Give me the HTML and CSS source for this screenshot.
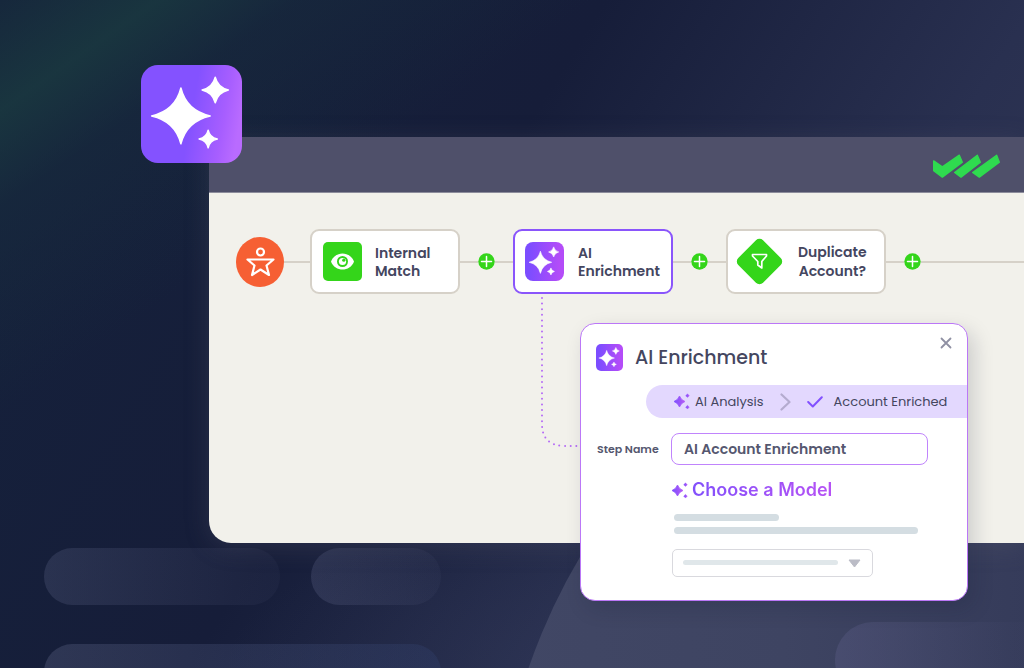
FILE: index.html
```
<!DOCTYPE html>
<html lang="en">
<head>
  <meta charset="UTF-8" />
  <meta name="viewport" content="width=device-width, initial-scale=1.0"/>
  <title>AI Enrichment</title>
  <link rel="stylesheet" href="styles.css">
</head>
<body>

  <!-- shared icons -->
  <svg class="defs" aria-hidden="true">
    <defs>
      <linearGradient id="purple" x1="0" y1="0" x2="1" y2="0">
        <stop offset="0" stop-color="#7c4dff"/>
        <stop offset="1" stop-color="#b65cf5"/>
      </linearGradient>
      <symbol id="sparkles" viewBox="0 0 100 100" preserveAspectRatio="none">
        <path d="M39.500 23.500Q45 46.500 68.500 52Q45 57.500 39.500 80.500Q34 57.500 10.500 52Q34 46.500 39.500 23.500Z" stroke-width="1.500" stroke-linejoin="round"/>
        <path d="M73.500 12.500Q76 23 86.500 25.500Q76 28 73.500 38.500Q71 28 60.500 25.500Q71 23 73.500 12.500Z" stroke-width="1.500" stroke-linejoin="round"/>
        <path d="M66.500 66.500Q68 74 75.500 75.500Q68 77 66.500 84.500Q65 77 57.500 75.500Q65 74 66.500 66.500Z" stroke-width="1.500" stroke-linejoin="round"/>
      </symbol>
      <symbol id="spark" viewBox="0 0 17 17">
        <path d="M5.500 3Q7 7 11 8.500Q7 10 5.500 14Q4 10 0 8.500Q4 7 5.500 3Z" stroke-width=".8" stroke-linejoin="round"/>
        <path d="M13.500 .8L15.400 2.700L13.500 4.600L11.600 2.700Z" stroke-width=".3"/>
        <path d="M13.500 12.300L15.400 14.200L13.500 16.100L11.600 14.200Z" stroke-width=".3"/>
      </symbol>
      <symbol id="plus" viewBox="0 0 17 17">
        <circle cx="8.500" cy="8.500" r="8.200" fill="#34d51a"/>
        <path d="M8.500 3.500V13.500M3.500 8.500H13.500" stroke="#fff" stroke-width="1.500" stroke-linecap="round"/>
      </symbol>
    </defs>
  </svg>

  <div class="scene">
    <div class="backdrop" aria-hidden="true">
      <span class="orb"></span>
      <span class="pill pill-a"></span>
      <span class="pill pill-b"></span>
      <span class="pill pill-c"></span>
      <span class="pill pill-d"></span>
    </div>

    <main class="window">
      <div class="app-badge">
        <svg class="sparkles"><use href="#sparkles"/></svg>
      </div>

      <header class="topbar">
        <svg class="logo" viewBox="0 0 201 71" role="img" aria-label="Logo">
          <g fill="#2fdb4f" stroke="#2fdb4f" stroke-width="4" stroke-linejoin="round">
            <path d="M2 20L28 38L79 3L88 24L28 69L2 50Z"/>
            <path d="M65 55L133 3L142 24L84 69Z"/>
            <path d="M119 55L191 3L199 24L139 69Z"/>
          </g>
        </svg>
      </header>

      <div class="canvas">
        <div class="flow">
          <div class="start">
            <svg viewBox="0 0 48 50" fill="none" stroke="#fff" stroke-width="2.200" stroke-linejoin="round">
              <circle cx="24.500" cy="15" r="3.500"/>
              <path d="M11.500 22.500H37.500L30.500 28.500L33 38L24.500 32.500L16 38L18.500 28.500Z"/>
            </svg>
          </div>
          <span class="line line-start"></span>
          <div class="step">
            <div class="step-icon green">
              <svg viewBox="0 0 39 39">
                <path d="M8 19.500C12 8.800 27 8.800 31 19.500C27 30.200 12 30.200 8 19.500Z" fill="#fff"/>
                <circle cx="19.500" cy="19.500" r="5.500" fill="#34d51a"/>
                <circle cx="19.500" cy="19.500" r="3.600" fill="#fff"/>
                <circle cx="20.800" cy="18.200" r="1.600" fill="#34d51a"/>
              </svg>
            </div>
            <span>Internal<br>Match</span>
          </div>
          <span class="line"></span>
          <button class="add" aria-label="Add step"><svg><use href="#plus"/></svg></button>
          <span class="line"></span>
          <div class="step step-wide active">
            <div class="step-icon purple">
              <svg class="sparkles"><use href="#sparkles"/></svg>
            </div>
            <span>AI<br>Enrichment</span>
          </div>
          <span class="line"></span>
          <button class="add" aria-label="Add step"><svg><use href="#plus"/></svg></button>
          <span class="line"></span>
          <div class="step step-wide condition">
            <svg class="diamond" viewBox="0 0 47 47">
              <rect x="6" y="6" width="35" height="35" rx="5" transform="rotate(45 23.500 23.500)" fill="#34d51a"/>
              <path d="M16.500 16.500H30.500V18L25.800 23.500V30L21.800 27V23.500L16.500 18Z" fill="none" stroke="#fff" stroke-width="1.700" stroke-linejoin="round"/>
            </svg>
            <span>Duplicate<br>Account?</span>
          </div>
          <span class="line"></span>
          <button class="add" aria-label="Add step"><svg><use href="#plus"/></svg></button>
          <span class="line line-end"></span>
        </div>
      </div>

      <svg class="connector" viewBox="0 0 40 152" fill="none" aria-hidden="true">
        <path d="M2 2V128Q2 150 25 150H40" stroke="#b56cf6" stroke-width="2" stroke-linecap="round" stroke-dasharray="0 5.600"/>
      </svg>

      <section class="panel">
        <button class="close" aria-label="Close">
          <svg viewBox="0 0 12 12"><path d="M1.500 1.500L10.500 10.500M10.500 1.500L1.500 10.500" stroke="#8f90a3" stroke-width="1.800" stroke-linecap="round"/></svg>
        </button>
        <div class="panel-head">
          <div class="panel-icon purple">
            <svg class="sparkles"><use href="#sparkles"/></svg>
          </div>
          <h2>AI Enrichment</h2>
        </div>

        <div class="progress">
          <svg class="spark"><use href="#spark"/></svg>
          <span>AI Analysis</span>
          <svg class="chevron" viewBox="0 0 11 18" fill="none"><path d="M1.500 1.500L9.500 9L1.500 16.500" stroke="#b4abcf" stroke-width="2.200" stroke-linecap="round" stroke-linejoin="round"/></svg>
          <svg class="tick" viewBox="0 0 16 12" fill="none"><path d="M1.200 6L5.800 10.500L14.800 1.200" stroke="#8250ff" stroke-width="2" stroke-linecap="round" stroke-linejoin="round"/></svg>
          <span>Account Enriched</span>
        </div>

        <div class="field">
          <label for="stepName">Step Name</label>
          <input type="text" id="stepName" value="AI Account Enrichment">
        </div>

        <div class="model">
          <h3><svg class="spark"><use href="#spark"/></svg><span>Choose a Model</span></h3>
          <div class="bar bar-short"></div>
          <div class="bar bar-long"></div>
          <div class="select-box">
            <select id="model" aria-label="Model">
              <option value=""></option>
            </select>
            <span class="select-bar"></span>
            <svg class="caret" viewBox="0 0 13 9"><path d="M1 1H12L6.500 8Z" fill="#bbbcc6" stroke="#bbbcc6" stroke-linejoin="round"/></svg>
          </div>
        </div>
      </section>
    </main>
  </div>

</body>
</html>
```
FILE: styles.css
```
* {
  box-sizing: border-box;
}
body {
  margin: 0;
  font-family: Poppins, Inter, sans-serif;
  color: #44465f;
}
svg {
  display: block;
}
h2, h3 {
  margin: 0;
}
button {
  padding: 0;
  border: 0;
  background: none;
  cursor: pointer;
}
.defs {
  position: absolute;
  width: 0;
  height: 0;
}

/* background */
.scene {
  position: relative;
  min-height: 100vh;
  padding: 137px 0 125px 209px;
  overflow: hidden;
  background:
    radial-gradient(ellipse 50% 26% at 72% 100%, rgba(64,70,104,0.4), rgba(64,70,104,0)),
    linear-gradient(145deg, rgba(24,48,60,0.4) 0%, rgba(26,58,64,0.8) 8%, rgba(24,48,62,0.4) 15%, rgba(22,32,58,0) 30%),
    linear-gradient(122deg, #15223c 0%, #161d39 42%, #293050 72%, #343956 100%);
}
.backdrop {
  position: absolute;
  inset: 0;
}
.orb {
  position: absolute;
  left: 496px;
  top: 263px;
  width: 1200px;
  height: 1200px;
  border-radius: 50%;
  background: linear-gradient(90deg, #414765 0%, #3e4462 24%, #353b5a 45%);
}
.pill {
  position: absolute;
  height: 57px;
  border-radius: 29px;
  background: linear-gradient(90deg, rgba(190,195,240,0.12), rgba(190,195,240,0.03));
}
.pill-a {
  left: 44px;
  top: 548px;
  width: 236px;
}
.pill-b {
  left: 311px;
  top: 548px;
  width: 130px;
}
.pill-c {
  left: 44px;
  top: 644px;
  width: 397px;
  background: linear-gradient(90deg, rgba(190,195,235,0.15), rgba(70,100,170,0.12));
}
.pill-d {
  left: 835px;
  top: 622px;
  width: 240px;
  height: 76px;
  border-radius: 38px;
  background: linear-gradient(90deg, rgba(100,100,145,0.3), rgba(100,100,145,0.03) 75%);
}

/* app window */
.window {
  position: relative;
  border-radius: 0 0 0 22px;
  box-shadow: 0 4px 24px rgba(90,88,110,0.3);
}
.topbar {
  display: flex;
  align-items: center;
  justify-content: flex-end;
  height: 56px;
  padding: 2px 24px 0 0;
  background: #4f506a;
  border-bottom: 1px solid #8d8d9c;
}
.logo {
  width: 67px;
  height: 24px;
}
.app-badge {
  position: absolute;
  left: -68px;
  top: -72px;
  width: 101px;
  height: 98px;
  border-radius: 17px;
  background: linear-gradient(100deg, #8452ff 50%, #a75eff 78%, #b96bff 92%);
}
.sparkles {
  width: 100%;
  height: 100%;
  fill: #fff;
  stroke: #fff;
}
.canvas {
  height: 350px;
  padding: 36px 0 0 27px;
  background: #f2f1eb;
  border-radius: 0 0 0 22px;
}

/* flow */
.flow {
  display: flex;
  align-items: center;
}
.flow > * {
  flex-shrink: 0;
}
.start {
  width: 48px;
  height: 50px;
  border-radius: 50%;
  background: #f65f33;
}
.line {
  width: 18px;
  height: 2px;
  background: #d6d1c8;
}
.line-start {
  width: 26px;
}
.flow .line-end {
  flex: 1;
}
.add {
  width: 17px;
  height: 17px;
}
.add svg {
  width: 17px;
  height: 17px;
}
.step {
  display: flex;
  align-items: center;
  gap: 13px;
  width: 150px;
  height: 65px;
  padding-left: 11px;
  background: #fff;
  border: 2px solid #d6d1c8;
  border-radius: 9px;
  font-size: 14px;
  line-height: 18px;
  font-weight: 600;
}
.step span {
  padding-top: 1px;
}
.step-wide {
  width: 160px;
}
.active {
  padding-left: 10px;
  gap: 14px;
  border-color: #8a55fb;
}
.condition {
  padding-left: 8px;
  gap: 15px;
  line-height: 19px;
  text-align: center;
}
.step-icon {
  width: 39px;
  height: 39px;
  border-radius: 5px;
}
.green {
  background: #34d51a;
}
.purple {
  background: linear-gradient(90deg, #7c4dff 10%, #b44cf8 90%);
  border-radius: 8px;
}
.diamond {
  width: 47px;
  height: 47px;
}
.connector {
  position: absolute;
  left: 331px;
  top: 159px;
  width: 40px;
  height: 152px;
}

/* enrichment panel */
.panel {
  position: absolute;
  left: 371px;
  top: 186px;
  width: 388px;
  padding: 20px 0 23px 15px;
  background: #fff;
  border: 1px solid #bb77f7;
  border-radius: 15px;
  box-shadow: 6px 8px 20px rgba(20,22,45,0.17);
}
.panel-head {
  display: flex;
  align-items: center;
  gap: 12px;
}
.panel-icon {
  width: 27px;
  height: 27px;
  border-radius: 5px;
}
.panel-head h2 {
  font-size: 19px;
  line-height: 27px;
  font-weight: 500;
}
.close {
  position: absolute;
  right: 15px;
  top: 13px;
}
.close svg {
  width: 12px;
  height: 12px;
}
.progress {
  display: flex;
  align-items: center;
  height: 33px;
  margin: 14px 0 15px 50px;
  padding-left: 28px;
  border-radius: 17px 0 0 17px;
  background: #e3d8fe;
}
.spark {
  width: 17px;
  height: 17px;
  fill: url(#purple);
  stroke: url(#purple);
}
.progress span {
  padding-top: 1px;
  font-size: 13px;
  line-height: 20px;
  white-space: nowrap;
}
.progress .spark {
  margin-right: 4px;
}
.chevron {
  width: 11px;
  height: 18px;
  margin: 0 16px;
}
.tick {
  width: 16px;
  height: 12px;
  margin-right: 11px;
}
.field {
  display: grid;
  grid-template-columns: 75px 257px;
  align-items: center;
}
.field label {
  padding-left: 1px;
  font-size: 11px;
  font-weight: 600;
  color: #55576f;
}
.field input {
  height: 32px;
  padding: 0 12px;
  border: 1px solid #c084fc;
  border-radius: 8px;
  background: #fff;
  font-family: inherit;
  font-size: 14px;
  font-weight: 600;
  color: #55576f;
}
.model {
  padding: 13px 0 0 76px;
}
.model h3 {
  display: flex;
  align-items: center;
  gap: 3px;
  margin-bottom: 12px;
  font-family: Inter, sans-serif;
  font-size: 18px;
  line-height: 24px;
  font-weight: 600;
}
.model h3 span {
  background: linear-gradient(90deg, #8250fb, #b652f5);
  background-clip: text;
  -webkit-background-clip: text;
  color: transparent;
}
.bar {
  height: 7px;
  margin-left: 2px;
  border-radius: 4px;
  background: #d4dde2;
}
.bar-short {
  width: 105px;
  margin-bottom: 6px;
}
.bar-long {
  width: 244px;
  margin-bottom: 15px;
}
.select-box {
  position: relative;
  width: 201px;
}
.select-box select {
  display: block;
  width: 100%;
  height: 28px;
  border: 1px solid #d9d9de;
  border-radius: 5px;
  background: #fff;
  appearance: none;
}
.select-bar {
  position: absolute;
  left: 11px;
  top: 11px;
  width: 155px;
  height: 5px;
  border-radius: 3px;
  background: #e0e7ea;
  pointer-events: none;
}
.caret {
  position: absolute;
  right: 12px;
  top: 10px;
  width: 13px;
  height: 9px;
  pointer-events: none;
}
```
